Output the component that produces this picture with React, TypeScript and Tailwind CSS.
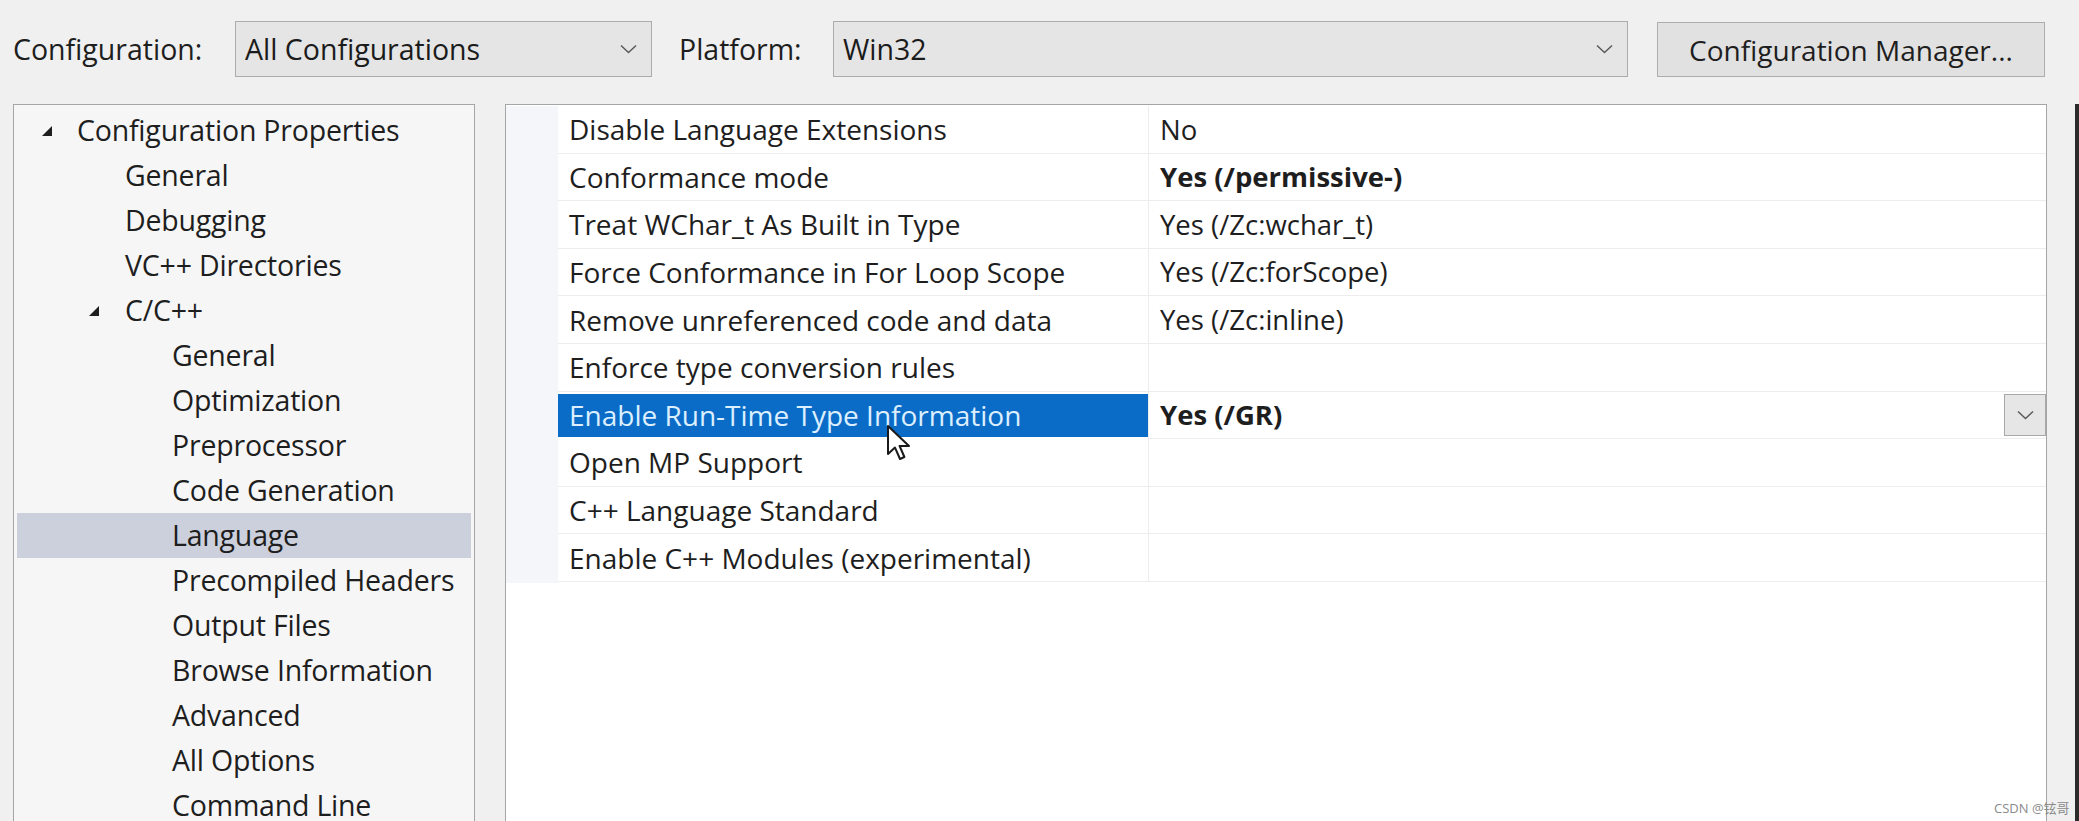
import { ReactNode } from 'react'

type TreeItem = {
  label: string
  level: number
  expanded?: boolean
  selected?: boolean
}

type Property = {
  name: string
  value: string
  bold?: boolean
  active?: boolean
}

const treeItems: TreeItem[] = [
  { label: 'Configuration Properties', level: 0, expanded: true },
  { label: 'General', level: 1 },
  { label: 'Debugging', level: 1 },
  { label: 'VC++ Directories', level: 1 },
  { label: 'C/C++', level: 1, expanded: true },
  { label: 'General', level: 2 },
  { label: 'Optimization', level: 2 },
  { label: 'Preprocessor', level: 2 },
  { label: 'Code Generation', level: 2 },
  { label: 'Language', level: 2, selected: true },
  { label: 'Precompiled Headers', level: 2 },
  { label: 'Output Files', level: 2 },
  { label: 'Browse Information', level: 2 },
  { label: 'Advanced', level: 2 },
  { label: 'All Options', level: 2 },
  { label: 'Command Line', level: 2 },
]

const properties: Property[] = [
  { name: 'Disable Language Extensions', value: 'No' },
  { name: 'Conformance mode', value: 'Yes (/permissive-)', bold: true },
  { name: 'Treat WChar_t As Built in Type', value: 'Yes (/Zc:wchar_t)' },
  { name: 'Force Conformance in For Loop Scope', value: 'Yes (/Zc:forScope)' },
  { name: 'Remove unreferenced code and data', value: 'Yes (/Zc:inline)' },
  { name: 'Enforce type conversion rules', value: '' },
  { name: 'Enable Run-Time Type Information', value: 'Yes (/GR)', bold: true, active: true },
  { name: 'Open MP Support', value: '' },
  { name: 'C++ Language Standard', value: '' },
  { name: 'Enable C++ Modules (experimental)', value: '' },
]

// Thin "v" used by the combo boxes
function Chevron() {
  return (
    <svg width="17" height="10" viewBox="0 0 17 10">
      <path d="M1 1.5 L8.5 8.5 L16 1.5" fill="none" stroke="#5a5a5a" strokeWidth="1.5" />
    </svg>
  )
}

// Filled expander triangle of the tree view
function Expander() {
  return (
    <svg width="12" height="12" viewBox="0 0 12 12">
      <polygon points="11,1 11,11 1,11" fill="#1e1e1e" />
    </svg>
  )
}

function ComboBox({ width, children }: { width: string; children: ReactNode }) {
  return (
    <div
      className={`${width} h-[56px] flex items-center justify-between bg-[#e5e5e5] border border-[#acacac] pl-[9px] pr-[14px] text-[28.5px] text-[#1b1b1b]`}
    >
      <span>{children}</span>
      <Chevron />
    </div>
  )
}

function App() {
  return (
    <div
      className="relative w-[2079px] h-[821px] overflow-hidden bg-[#f0f0f0] text-[#1e1e1e]"
      style={{ fontFamily: '"Open Sans", "Noto Sans", "Noto Sans CJK SC", sans-serif' }}
    >
      {/* Top toolbar */}
      <div className="h-[104px] flex items-start pt-[21px] pl-[13px]">
        <div className="w-[222px] h-[56px] flex items-center text-[28.5px]">
          Configuration:
        </div>
        <ComboBox width="w-[417px]">All Configurations</ComboBox>
        <div className="ml-[27px] w-[154px] h-[56px] flex items-center text-[28.5px]">
          Platform:
        </div>
        <ComboBox width="w-[795px]">Win32</ComboBox>
        <div className="ml-[29px] w-[388px] h-[55px] mt-[1px] flex items-center justify-center bg-[#e1e1e1] border border-[#adadad] text-[28px]">
          Configuration Manager...
        </div>
      </div>

      <div className="flex h-[717px]">
        {/* Tree view */}
        <div className="ml-[13px] w-[462px] h-[740px] bg-[#f6f6f6] border border-[#a5a5a5] pt-[3px] px-[3px]">
          {treeItems.map((item, i) => (
            <div
              key={i}
              className={`h-[45px] flex items-center whitespace-nowrap text-[28.5px] tracking-[-0.2px] ${
                item.selected ? 'bg-[#ccd0dc]' : ''
              }`}
            >
              {item.level === 0 && (
                <>
                  <span className="ml-[24px] w-[36px] flex">
                    <Expander />
                  </span>
                  <span>{item.label}</span>
                </>
              )}
              {item.level === 1 &&
                (item.expanded ? (
                  <>
                    <span className="ml-[71px] w-[37px] flex">
                      <Expander />
                    </span>
                    <span>{item.label}</span>
                  </>
                ) : (
                  <span className="ml-[108px]">{item.label}</span>
                ))}
              {item.level === 2 && <span className="ml-[155px]">{item.label}</span>}
            </div>
          ))}
        </div>

        {/* Property grid */}
        <div className="ml-[30px] w-[1542px] h-[740px] bg-white border border-[#a5a5a5] pt-[1px]">
          {properties.map((prop, i) => (
            <div key={i} className="h-[47.6px] flex">
              <div className="w-[52px] bg-[#f4f6fa]" />
              <div
                className={`w-[590px] flex items-center whitespace-nowrap pl-[11px] text-[28px] border-b border-[#ededed] ${
                  prop.active ? 'bg-[#0b6cc7] text-[#dcefff] my-[2px] border-b-0' : ''
                }`}
              >
                {prop.name}
              </div>
              <div className="flex-1 flex items-center justify-between pl-[11px] border-l border-b border-[#ededed] text-[27.5px]">
                <span className={prop.bold ? 'font-bold' : ''}>{prop.value}</span>
                {prop.active && (
                  <div className="w-[42px] h-[42px] flex items-center justify-center bg-[#e6e6e6] border border-[#a9a9a9]">
                    <Chevron />
                  </div>
                )}
              </div>
            </div>
          ))}
          <div className="h-[1px] w-[52px] bg-[#f4f6fa]" />
        </div>

        <div className="flex-1" />
        <div className="w-[4px] bg-[#2b2b2b]" />
      </div>

      {/* Mouse pointer over the selected row */}
      <svg
        width="26"
        height="38"
        viewBox="0 0 13 19"
        className="absolute left-[886px] top-[424px]"
      >
        <path
          d="M1 1 L1 15 L4.5 11.8 L7 17.5 L9.2 16.5 L6.8 11 L11.5 11 Z"
          fill="#ffffff"
          stroke="#1a1a1a"
          strokeWidth="1"
          strokeLinejoin="round"
        />
      </svg>

      {/* Watermark */}
      <div className="absolute left-[1994px] top-[799px] text-[13px] text-[#8a8a8a]">
        CSDN @铉哥
      </div>
    </div>
  )
}

export default App
